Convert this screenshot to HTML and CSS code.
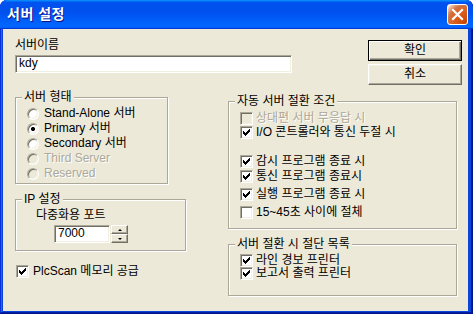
FILE: index.html
```html
<!DOCTYPE html>
<html lang="ko">

<head>
	<meta charset="UTF-8">
	<title>서버 설정</title>
	<link rel="stylesheet" href="styles.css">
</head>

<body>
	<div class="window">
		<div class="titlebar">
			<span class="title">서버 설정</span>
			<span class="close">
				<svg width="13" height="13" viewBox="0 0 13 13"><path d="M2 2L11 11M11 2L2 11" stroke="#fff" stroke-width="2.2" stroke-linecap="square" /></svg>
			</span>
		</div>
		<div class="client">
			<div class="top">
				<div class="name-field">
					<div class="label">서버이름</div>
					<div class="textbox name">kdy</div>
				</div>
				<div class="buttons">
					<div class="btn default">확인</div>
					<div class="btn">취소</div>
				</div>
			</div>
			<div class="main">
				<div class="col left">
					<fieldset class="group type-group">
						<legend>서버 형태</legend>
						<div class="opt"><span class="radio"></span>Stand-Alone 서버</div>
						<div class="opt"><span class="radio on"></span>Primary 서버</div>
						<div class="opt"><span class="radio"></span>Secondary 서버</div>
						<div class="opt off"><span class="radio"></span>Third Server</div>
						<div class="opt off"><span class="radio"></span>Reserved</div>
					</fieldset>
					<fieldset class="group ip-group">
						<legend>IP 설정</legend>
						<div class="port-label">다중화용 포트</div>
						<div class="port-row">
							<div class="textbox port">7000</div>
							<div class="spin">
								<span class="spin-btn"><i class="arrow up"></i></span>
								<span class="spin-btn"><i class="arrow down"></i></span>
							</div>
						</div>
					</fieldset>
					<div class="opt plc">
						<span class="check"><svg width="11" height="11" viewBox="1 1 11 11" shape-rendering="crispEdges"><path d="M9 3h1v1h-1zM8 4h2v1h-2zM3 5h1v1h-1zM7 5h3v1h-3zM3 6h2v1h-2zM6 6h3v1h-3zM3 7h5v1h-5zM4 8h3v1h-3zM5 9h1v1h-1z" /></svg></span>PlcScan 메모리 공급
					</div>
				</div>
				<div class="col right">
					<fieldset class="group auto-group">
						<legend>자동 서버 절환 조건</legend>
						<div class="opt off r1"><span class="check"></span>상대편 서버 무응답 시</div>
						<div class="opt r2"><span class="check"><svg width="11" height="11" viewBox="1 1 11 11" shape-rendering="crispEdges"><path d="M9 3h1v1h-1zM8 4h2v1h-2zM3 5h1v1h-1zM7 5h3v1h-3zM3 6h2v1h-2zM6 6h3v1h-3zM3 7h5v1h-5zM4 8h3v1h-3zM5 9h1v1h-1z" /></svg></span>I/O 콘트롤러와 통신 두절 시</div>
						<div class="opt r3"><span class="check"><svg width="11" height="11" viewBox="1 1 11 11" shape-rendering="crispEdges"><path d="M9 3h1v1h-1zM8 4h2v1h-2zM3 5h1v1h-1zM7 5h3v1h-3zM3 6h2v1h-2zM6 6h3v1h-3zM3 7h5v1h-5zM4 8h3v1h-3zM5 9h1v1h-1z" /></svg></span>감시 프로그램 종료 시</div>
						<div class="opt r4"><span class="check"><svg width="11" height="11" viewBox="1 1 11 11" shape-rendering="crispEdges"><path d="M9 3h1v1h-1zM8 4h2v1h-2zM3 5h1v1h-1zM7 5h3v1h-3zM3 6h2v1h-2zM6 6h3v1h-3zM3 7h5v1h-5zM4 8h3v1h-3zM5 9h1v1h-1z" /></svg></span>통신 프로그램 종료시</div>
						<div class="opt r5"><span class="check"><svg width="11" height="11" viewBox="1 1 11 11" shape-rendering="crispEdges"><path d="M9 3h1v1h-1zM8 4h2v1h-2zM3 5h1v1h-1zM7 5h3v1h-3zM3 6h2v1h-2zM6 6h3v1h-3zM3 7h5v1h-5zM4 8h3v1h-3zM5 9h1v1h-1z" /></svg></span>실행 프로그램 종료 시</div>
						<div class="opt r6"><span class="check"></span>15~45초 사이에 절체</div>
					</fieldset>
					<fieldset class="group cut-group">
						<legend>서버 절환 시 절단 목록</legend>
						<div class="opt"><span class="check"><svg width="11" height="11" viewBox="1 1 11 11" shape-rendering="crispEdges"><path d="M9 3h1v1h-1zM8 4h2v1h-2zM3 5h1v1h-1zM7 5h3v1h-3zM3 6h2v1h-2zM6 6h3v1h-3zM3 7h5v1h-5zM4 8h3v1h-3zM5 9h1v1h-1z" /></svg></span>라인 경보 프린터</div>
						<div class="opt"><span class="check"><svg width="11" height="11" viewBox="1 1 11 11" shape-rendering="crispEdges"><path d="M9 3h1v1h-1zM8 4h2v1h-2zM3 5h1v1h-1zM7 5h3v1h-3zM3 6h2v1h-2zM6 6h3v1h-3zM3 7h5v1h-5zM4 8h3v1h-3zM5 9h1v1h-1z" /></svg></span>보고서 출력 프린터</div>
					</fieldset>
				</div>
			</div>
		</div>
	</div>
</body>

</html>
```
FILE: styles.css
```css
body {
	margin: 0;
	background: #fff;
	font-family: "Liberation Sans", "Noto Sans CJK KR", sans-serif;
	font-size: 12px;
	line-height: 15px;
	color: #000;
}

.window {
	width: 473px;
	height: 314px;
	display: flex;
	flex-direction: column;
	background: #0845d8;
	border-radius: 7px 7px 0 0;
	box-shadow: inset -1px -1px #00138c, inset 1px 1px #0831d9, inset -2px -2px #001ea0, inset 2px 2px #166aee;
	overflow: hidden;
}

.titlebar {
	height: 29px;
	flex: none;
	display: flex;
	align-items: center;
	justify-content: space-between;
	padding: 0 5px 0 7px;
	background: linear-gradient(180deg, #0997ff, #0053ee 8%, #0050ee 40%, #06f 88%, #06f 93%, #005bff 95%, #003dd7 96%, #003dd7);
	border-radius: 7px 7px 0 0;
}
.title {
	color: #fff;
	font-weight: bold;
	font-size: 14px;
	letter-spacing: 0.5px;
	text-shadow: 1px 1px #0f1089;
}
.close {
	width: 19px;
	height: 19px;
	display: flex;
	align-items: center;
	justify-content: center;
	border: 1px solid #fff;
	border-radius: 3px;
	background: radial-gradient(circle at 90% 90%, #cc4600 0%, #dc6527 55%, #cd7546 70%, #ffccb2 90%, #fff 100%);
}

.client {
	flex: 1;
	margin: 0 5px 3px 3px;
	padding: 0 6px 0 12px;
	background: #ece9d8;
}

.top {
	display: flex;
	justify-content: space-between;
}
.name-field {
	margin-top: 9px;
}
.textbox {
	box-sizing: border-box;
	height: 18px;
	padding: 0 3px;
	background: #fff;
	border: 1px solid;
	border-color: #aca899 #fff #fff #aca899;
	box-shadow: inset 1px 1px #716f64, inset -1px -1px #f1efe2;
	line-height: 15px;
}
.textbox.name {
	width: 277px;
	margin-top: 2px;
}

.buttons {
	margin-top: 11px;
	display: flex;
	flex-direction: column;
	gap: 3px;
}
.btn {
	box-sizing: border-box;
	width: 94px;
	height: 21px;
	display: flex;
	align-items: center;
	justify-content: center;
	border: 1px solid;
	border-color: #fff #716f64 #716f64 #fff;
	box-shadow: inset -1px -1px #aca899, inset 1px 1px #f1efe2;
}
.btn.default {
	border-color: #000;
	box-shadow: inset 1px 1px #fff, inset -1px -1px #716f64, inset -2px -2px #aca899;
}

.main {
	display: flex;
	gap: 42px;
}
.col.left {
	width: 171px;
}
.col.right {
	width: 229px;
}

.group {
	margin: 0;
	padding: 0;
	border: 1px solid #aca899;
	box-shadow: inset 1px 1px #fff, 1px 1px #fff;
}
.group legend {
	margin-left: 6px;
	padding: 0 2px;
	line-height: 16px;
	background: #ece9d8;
}

.opt {
	display: flex;
	align-items: center;
	height: 15px;
	line-height: 13px;
	white-space: nowrap;
}
.opt.off {
	color: #aca899;
	text-shadow: 1px 1px #fff;
}

.radio {
	box-sizing: border-box;
	width: 12px;
	height: 12px;
	margin: 0 5px 0 11px;
	border-radius: 50%;
	border: 1px solid;
	border-color: #aca899 #fff #fff #aca899;
	box-shadow: inset 1px 1px #716f64, inset -1px -1px #f1efe2;
	background: #fff;
}
.radio.on {
	background: radial-gradient(circle, #000 1.8px, #fff 2.3px);
}
.opt.off .radio {
	background: #ece9d8;
}

.check {
	box-sizing: border-box;
	width: 13px;
	height: 13px;
	flex: none;
	border: 1px solid;
	border-color: #aca899 #fff #fff #aca899;
	box-shadow: inset 1px 1px #716f64, inset -1px -1px #f1efe2;
	background: #fff;
}
.check svg {
	display: block;
}
.opt.off .check {
	background: #ece9d8;
}

.type-group {
	width: 151px;
	margin-top: 4px;
	padding: 1px 0 2px;
}

.ip-group {
	margin-top: 7px;
	padding: 1px 0 7px;
}
.port-label {
	padding-left: 20px;
}
.port-row {
	display: flex;
	margin: 2px 0 0 38px;
}
.textbox.port {
	width: 56px;
}
.spin {
	display: flex;
	flex-direction: column;
	margin-left: 1px;
}
.spin-btn {
	box-sizing: border-box;
	width: 17px;
	height: 9px;
	display: flex;
	align-items: center;
	justify-content: center;
	border: 1px solid;
	border-color: #fff #716f64 #716f64 #fff;
	box-shadow: inset -1px -1px #aca899;
}
.arrow {
	width: 0;
	height: 0;
	border-left: 2px solid transparent;
	border-right: 2px solid transparent;
}
.arrow.up {
	border-bottom: 2px solid #000;
}
.arrow.down {
	border-top: 2px solid #000;
}

.plc {
	margin-top: 13px;
}
.plc .check {
	margin: 0 4px 0 1px;
}

.right .check {
	margin: 0 3px 0 11px;
}
.auto-group {
	margin-top: 8px;
	padding: 2px 0 9px;
}
.auto-group .opt {
	height: 14px;
}
.auto-group .r3 {
	margin-top: 15px;
}
.auto-group .r4 {
	margin-top: 1px;
}
.auto-group .r5,
.auto-group .r6 {
	margin-top: 4px;
}

.cut-group {
	margin-top: 7px;
	padding: 2px 0 15px;
}
.cut-group .opt {
	height: 13px;
}
```
